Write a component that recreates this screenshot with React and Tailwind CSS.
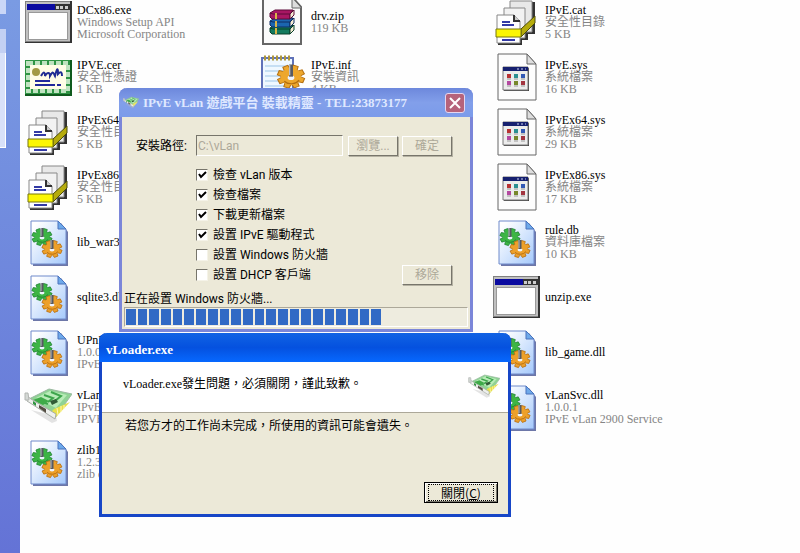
import clsx from 'clsx';

const columns = [
  [
    { icon: 'exe', name: 'DCx86.exe', lines: ['Windows Setup API', 'Microsoft Corporation'] },
    { icon: 'cert', name: 'IPVE.cer', lines: ['安全性憑證', '1 KB'] },
    { icon: 'catalog', name: 'IPvEx64.', lines: ['安全性目', '5 KB'] },
    { icon: 'catalog', name: 'IPvEx86.', lines: ['安全性目', '5 KB'] },
    { icon: 'dll', name: 'lib_war3.', lines: [] },
    { icon: 'dll', name: 'sqlite3.dll', lines: [] },
    { icon: 'dll', name: 'UPnP', lines: ['1.0.0', 'IPvE'] },
    { icon: 'card', name: 'vLan', lines: ['IPvE', 'IPVE'] },
    { icon: 'dll', name: 'zlib1', lines: ['1.2.3', 'zlib d'] },
  ],
  [
    { icon: 'zip', name: 'drv.zip', lines: ['119 KB'] },
    { icon: 'inf', name: 'IPvE.inf', lines: ['安裝資訊', '4 KB'] },
  ],
  [
    { icon: 'catalog', name: 'IPvE.cat', lines: ['安全性目錄', '5 KB'] },
    { icon: 'sys', name: 'IPvE.sys', lines: ['系統檔案', '16 KB'] },
    { icon: 'sys', name: 'IPvEx64.sys', lines: ['系統檔案', '29 KB'] },
    { icon: 'sys', name: 'IPvEx86.sys', lines: ['系統檔案', '17 KB'] },
    { icon: 'dll', name: 'rule.db', lines: ['資料庫檔案', '10 KB'] },
    { icon: 'exe', name: 'unzip.exe', lines: [] },
    { icon: 'dll', name: 'lib_game.dll', lines: [] },
    { icon: 'dll', name: 'vLanSvc.dll', lines: ['1.0.0.1', 'IPvE vLan 2900 Service'] },
  ],
];

const options = [
  { id: 'version', label: '檢查 vLan 版本', checked: true },
  { id: 'files', label: '檢查檔案', checked: true },
  { id: 'update', label: '下載更新檔案', checked: true },
  { id: 'driver', label: '設置 IPvE 驅動程式', checked: true },
  { id: 'firewall', label: '設置 Windows 防火牆', checked: false },
  { id: 'dhcp', label: '設置 DHCP 客戶端', checked: false },
];

function ExeIcon() {
  return (
    <svg width="48" height="48" viewBox="0 0 48 48">
      <path d="M1 3h47v42H1z" fill="#333" />
      <path d="M1 3h45v41H1z" fill="#808080" />
      <path d="M2 4h44v39H2z" fill="#c0c0c0" />
      <path d="M3 6h43v6H3z" fill="#0a0aa0" />
      <path d="M31 6h15v6H31z" fill="#333" />
      <path d="M32 8h3v3h-3zM36 8h3v3h-3zM41 8h3v3h-3z" fill="#ccc" />
      <path d="M4 14h40v28H4z" fill="#999" />
      <path d="M5 15h38v26H5z" fill="#fff" />
    </svg>
  );
}

function CertIcon() {
  return (
    <svg width="48" height="48" viewBox="0 0 48 48">
      <path d="M1 7h47v36H1z" fill="#0f5a1d" />
      <path d="M1 7h45v34H1z" fill="#2f9444" />
      <rect x="4" y="10" width="40" height="28" fill="none" stroke="#bfe3c0" strokeWidth="4" strokeDasharray="5 2" />
      <path d="M6 12h36v24H6z" fill="#fffde6" />
      <circle cx="12" cy="19" r="4" fill="#a39a43" />
      <path d="M17 23c3-5 4-4 4 0 2-4 5-4 5 0 3-5 3-4 5 0 2-8 3-9 3-2 3-3 4-2 4 2" fill="none" stroke="#202c92" strokeWidth="2" />
      <path d="M11 28h15M11 32h20M33 32h4" stroke="#22299b" strokeWidth="2" fill="none" />
    </svg>
  );
}

function CatalogIcon() {
  return (
    <svg width="48" height="48" viewBox="0 0 48 48">
      <g fill="#333">
        <path d="M19 4h24v32H19zM13 11h23v31H13zM6 18h24v29H6z" />
      </g>
      <g stroke="#888">
        <path d="M18 3h22v31H18z" fill="#e8e8e8" />
        <path d="M12 10h21v30H12z" fill="#f2f2f2" />
        <path d="M5 17h17l6 6v22H5z" fill="#fff" />
      </g>
      <path d="M22 17v6h6" fill="#ccc" stroke="#333" strokeWidth="2" />
      <path d="M10 24h8M10 27h12M10 42h13" stroke="#333aa5" strokeWidth="2" />
      <path d="m29 31 14-13v7L29 39z" fill="#b5ab0c" stroke="#4b4b0b" />
      <path d="M4 31h25v8H4z" fill="#fbf605" stroke="#77770c" />
    </svg>
  );
}

function Gear({ x, y, fill, stroke }) {
  const teeth = [0, 45, 90, 135, 180, 225, 270, 315];
  return (
    <g transform={`translate(${x} ${y})`}>
      <g transform="scale(1 .85)">
        {teeth.map((a) => (
          <path key={a} d="M-2.5-5 -2-10h4l.5 5z" fill={fill} stroke={stroke} strokeWidth="0.8" transform={`rotate(${a + 20})`} />
        ))}
        <circle r="7.5" fill={fill} />
        <path d="M-5 4a7 7 0 0 0 11-1" fill="none" stroke={stroke} />
        <ellipse rx="2.5" ry="2" cy="1" fill="#eef4ff" />
      </g>
      <path d="M0-9v9" stroke="#575a62" strokeWidth="3" />
      <path d="M-1-9v8" stroke="#b9bcc4" />
    </g>
  );
}

function DllIcon() {
  return (
    <svg width="48" height="48" viewBox="0 0 48 48">
      <defs>
        <linearGradient id="dllPage" x1="0" y1="0" x2="1" y2="1">
          <stop offset="0.1" stopColor="#fff" />
          <stop offset="1" stopColor="#a5c9fb" />
        </linearGradient>
      </defs>
      <path d="M9 5h28l7 9v34H9z" fill="#6d77a8" />
      <path d="M7 3h27l8 8v35H7z" fill="url(#dllPage)" stroke="#6f8acb" />
      <path d="M34 3v8h8z" fill="#6ea9ea" stroke="#4a73bd" />
      <Gear x={18} y={19} fill="#3db544" stroke="#218335" />
      <Gear x={28} y={31} fill="#eda02a" stroke="#b66d10" />
    </svg>
  );
}

function CardIcon({ size = 48 }) {
  return (
    <svg width={size} height={size} viewBox="0 0 48 48">
      <path d="m7 27 21 13 5-2-1-5z" fill="#bbb" opacity=".4" />
      <path d="M5 16 25 6l23 5-17 24z" fill="#8fd394" stroke="#9ab8a0" />
      <path d="m12 15 14-7 17 4-11 13z" fill="#b9ecb8" />
      <path d="m20 12 9 3-5 4M27 9l10 4-6 5M14 17l10 4" stroke="#3da54c" strokeWidth="2" fill="none" />
      <path d="m9 17 8-3 8 4-6 4z" fill="#3fab48" />
      <path d="m26 18 6-2 2 3-6 3z" fill="#315c36" />
      <path d="m30 26 16-7-15 16-5-5z" fill="#e8e04a" />
      <path d="m33 25 1 7m3-9v6m3-7v4" stroke="#fff8b4" />
      <path d="M3 13v5l28 18 1-5L7 16z" fill="#eef0ed" stroke="#a9aea9" />
      <path d="m15 22 7 4v4l-7-5z" fill="#544d43" />
      <path d="m9 18 3 2v3l-3-2z" fill="#309540" />
      <path d="M1 10h3l1 7H1z" fill="#d4d8d5" stroke="#b2b5b2" />
    </svg>
  );
}

function ZipIcon() {
  const books = [
    { y: 28, fill: '#137a5e', dark: '#063f29' },
    { y: 21, fill: '#1b65af', dark: '#0f2d63' },
    { y: 13, fill: '#a81663', dark: '#5c0a38' },
  ];
  return (
    <svg width="48" height="48" viewBox="0 0 48 48">
      <path d="M5 0h30l8 9v37H5z" fill="#fafafa" stroke="#666" strokeWidth="2" />
      <path d="M34 0v10h9" fill="#ddd" stroke="#666" />
      {books.map((b) => (
        <g key={b.y} transform={`translate(0 ${b.y})`}>
          <path d="m12 2 5-3h18l-3 4v5H14l-2-2z" fill={b.fill} stroke={b.dark} />
          <path d="m32 3 4-4v5l-4 4z" fill="#f3ead2" stroke={b.dark} />
          <path d="m12 2 3 1h17" fill="none" stroke={b.dark} />
          <path d="M17 2h2v6h-2z" fill="#d8b348" />
        </g>
      ))}
    </svg>
  );
}

function InfIcon() {
  return (
    <svg width="48" height="48" viewBox="0 0 48 48">
      <path d="M4 5h31v41H4z" fill="#eff8ff" stroke="#6072b8" strokeWidth="2" />
      <path d="M7 13h24M7 18h24M7 23h24M7 28h24M7 33h24" stroke="#9cc5e7" />
      <path d="M6 5h28" stroke="#ad963c" strokeWidth="5" strokeDasharray="2 2" />
      <g transform="translate(6 -2) scale(1.35)">
        <Gear x={20} y={19} fill="#eda72c" stroke="#b46f10" />
      </g>
    </svg>
  );
}

function SysIcon() {
  const dots = [
    ['#b83232', 17, 23], ['#2c8f91', 24, 23], ['#3158b5', 31, 23],
    ['#b448a0', 17, 30], ['#77872b', 24, 30], ['#a2343f', 31, 30],
  ];
  return (
    <svg width="48" height="48" viewBox="0 0 48 48">
      <path d="M6 1h29l9 10v36H6z" fill="#fdfdfd" stroke="#666" />
      <path d="M35 1v10h9z" fill="#ddd" stroke="#666" />
      <path d="M12 15h25v23H12z" fill="#444" />
      <path d="M11 14h25v23H11z" fill="#ececec" stroke="#777" />
      <path d="M11 14h25v4H11z" fill="#16206f" />
      <path d="M25 16h2m2 0h2m2 0h1" stroke="#cbd1ef" />
      {dots.map(([fill, x, y]) => (
        <g key={fill}>
          <path d={`M${x - 2} ${y - 2}h4v4h-4z`} fill={fill} />
          <path d={`M${x - 2} ${y + 3}h4`} stroke="#999" />
        </g>
      ))}
    </svg>
  );
}

const icons = {
  exe: ExeIcon,
  cert: CertIcon,
  catalog: CatalogIcon,
  dll: DllIcon,
  card: CardIcon,
  zip: ZipIcon,
  inf: InfIcon,
  sys: SysIcon,
};

function FileItem({ file }) {
  const Icon = icons[file.icon];
  return (
    <li className="flex h-[55px] items-center gap-[5px]">
      <span className="shrink-0"><Icon /></span>
      <div className="text-xs leading-3 whitespace-nowrap text-[#858585]">
        <p className="text-black">{file.name}</p>
        {file.lines.map((line) => <p key={line}>{line}</p>)}
      </div>
    </li>
  );
}

function ClassicButton({ children, className, ...props }) {
  return (
    <button
      type="button"
      className={clsx(
        'h-5 w-[50px] border border-t-white border-l-white border-r-[#77756b] border-b-[#77756b] bg-[#ece9d8] text-xs leading-4 shadow-[1px_1px_0_#b5b2a3] disabled:text-[#aca899]',
        className
      )}
      {...props}
    >
      {children}
    </button>
  );
}

function InstallerWindow() {
  return (
    <section className="absolute top-[88px] left-[119px] w-[354px] rounded-t-lg border-[3px] border-t-0 border-[#7b86d9] bg-[#ece9d8] font-['Roboto','Noto_Sans_CJK_TC',sans-serif] text-xs text-black">
      <header className="-mx-[3px] flex h-[29px] items-center gap-1 rounded-t-lg bg-linear-to-b from-[#6d88dc] via-[#829fea] to-[#7b9bea] px-1 font-['Liberation_Serif','Noto_Sans_CJK_TC',serif] text-[#dfe8ff]">
        <CardIcon size={16} />
        <h1 className="flex-1 text-[13px] font-bold whitespace-nowrap">IPvE vLan 遊戲平台 裝載精靈 - TEL:23873177</h1>
        <button type="button" aria-label="關閉" className="mr-1 flex size-5 items-center justify-center rounded-[3px] border border-[#e5d6ef] bg-[#b6637b]">
          <svg width="14" height="14" viewBox="0 0 14 14">
            <path d="m2 2 10 10M12 2 2 12" stroke="#fff" strokeWidth="2" />
          </svg>
        </button>
      </header>
      <div className="px-[14px] pt-[18px]">
        <div className="flex items-center">
          <label htmlFor="path" className="w-[60px] whitespace-nowrap">安裝路徑:</label>
          <input
            id="path"
            disabled
            defaultValue={'C:\\vLan'}
            className="h-[21px] min-w-0 flex-1 border border-t-[#77756b] border-l-[#77756b] border-r-white border-b-white bg-[#ece9d8] pl-px text-[#aca899]"
          />
          <ClassicButton disabled className="ml-[5px]">瀏覽...</ClassicButton>
          <ClassicButton disabled className="mr-1 ml-1">確定</ClassicButton>
        </div>
        <div className="flex items-end justify-between pt-[9px] pl-[60px]">
          <ul>
            {options.map((o) => (
              <li key={o.id} className="flex h-5 items-center gap-[5px]">
                <span className="grid size-3">
                  <input
                    id={o.id}
                    type="checkbox"
                    defaultChecked={o.checked}
                    className="peer col-start-1 row-start-1 size-3 appearance-none border border-t-[#77756b] border-l-[#77756b] border-r-[#f5f3e8] border-b-[#f5f3e8] bg-white"
                  />
                  <svg viewBox="0 0 12 12" className="pointer-events-none invisible col-start-1 row-start-1 size-3 peer-checked:visible">
                    <path d="m3 5 2 3 5-5" fill="none" stroke="#000" strokeWidth="2" />
                  </svg>
                </span>
                <label htmlFor={o.id} className="whitespace-nowrap">{o.label}</label>
              </li>
            ))}
          </ul>
          <ClassicButton disabled className="mr-1">移除</ClassicButton>
        </div>
      </div>
      <p className="mt-[6px] pl-[2px] leading-4 whitespace-nowrap">正在設置 Windows 防火牆...</p>
      <div className="mx-[2px] mb-[2px] h-5 border border-t-[#aca899] border-l-[#aca899] border-r-white border-b-white bg-[#eeecdf] p-px">
        <div
          role="progressbar"
          aria-label="安裝進度"
          aria-valuenow={75}
          className="flex h-full w-3/4 gap-[2px]"
        >
          {Array.from({ length: 22 }, (_, i) => (
            <span key={i} className="flex-1 bg-[#316ac5]" />
          ))}
        </div>
      </div>
    </section>
  );
}

function ErrorDialog() {
  return (
    <section
      role="alertdialog"
      aria-labelledby="error-title"
      className="absolute top-[333px] left-[99px] w-[412px] rounded-t-lg border-[3px] border-t-0 border-[#1746c7] bg-[#ece9d8] font-['Noto_Sans_CJK_TC',sans-serif] text-xs text-black"
    >
      <header className="-mx-[3px] flex h-[29px] items-center rounded-t-lg bg-linear-to-b from-[#1263e4] via-[#0551df] to-[#0768ff] px-[7px] pt-1">
        <h2 id="error-title" className="font-['Liberation_Serif',serif] text-[13px] font-bold text-white">vLoader.exe</h2>
      </header>
      <div className="flex h-[51px] items-center justify-between border-b border-[#aca899] bg-white pr-2 pl-[21px]">
        <p className="pb-[6px] font-['Liberation_Serif','Noto_Sans_CJK_TC',serif] whitespace-nowrap">vLoader.exe發生問題，必須關閉，謹此致歉。</p>
        <CardIcon size={32} />
      </div>
      <p className="h-[69px] pt-1 pl-[23px] leading-4 whitespace-nowrap">若您方才的工作尚未完成，所使用的資訊可能會遺失。</p>
      <div className="flex justify-end pr-[10px] pb-[11px]">
        <button type="button" className="h-[21px] w-[74px] border border-black bg-[#ece9d8] p-px text-xs leading-[15px] shadow-[inset_1px_1px_0_#fff,inset_-1px_-1px_0_#77756b]">
          <span className="mx-[2px] block border border-dotted border-black">關閉(<u>C</u>)</span>
        </button>
      </div>
    </section>
  );
}

export default function App() {
  return (
    <main className="relative flex h-screen overflow-hidden bg-[#fefefe] font-['Liberation_Serif','Noto_Sans_CJK_TC',serif]">
      <aside className="w-5 shrink-0 bg-linear-to-b from-[#7a9be3] to-[#6473d6]">
        <div className="h-[14px] w-[6px] bg-[#cad7f7]" />
        <div className="mt-[15px] h-[24px] w-[6px] bg-[#c3d0f3]" />
        <div className="h-[95px] w-[6px] border-r border-b border-white bg-[#d8e1f9]" />
      </aside>
      <div className="-mt-[6px] flex min-w-0 flex-1 pl-1">
        {columns.map((files, i) => (
          <ul key={i} className="w-[234px] shrink-0">
            {files.map((file) => <FileItem key={file.name} file={file} />)}
          </ul>
        ))}
      </div>
      <InstallerWindow />
      <ErrorDialog />
    </main>
  );
}
